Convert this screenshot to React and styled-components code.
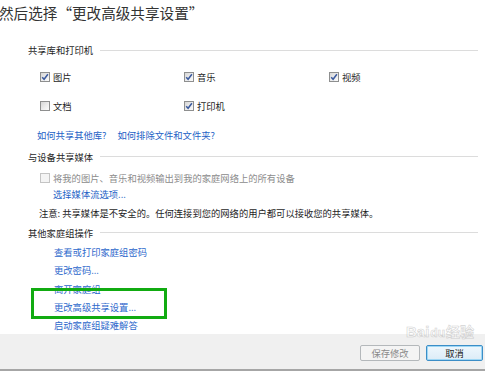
import React from "react";
import styled, { createGlobalStyle } from "styled-components";

const Global = createGlobalStyle`
  html, body {
    margin: 0;
    padding: 0;
    background: #ffffff;
  }
`;

const Page = styled.div`
  position: relative;
  width: 485px;
  height: 373px;
  overflow: hidden;
  display: flex;
  flex-direction: column;
  background: #ffffff;
  font-family: "Noto Sans CJK SC", "Liberation Sans", sans-serif;
  color: #1e1e1e;
`;

const Title = styled.div`
  height: 26px;
  line-height: 26px;
  margin-left: -1px;
  font-size: 14.6px;
  color: #333333;
  white-space: nowrap;
`;

const Main = styled.div`
  flex: 1;
  padding: 0 7px 0 28px;
  font-size: 9.3px;
`;

const Row = styled.div`
  display: flex;
  align-items: center;
  height: ${(p) => p.$h}px;
  margin-top: ${(p) => p.$mt || 0}px;
  padding-left: ${(p) => p.$pl || 0}px;
  white-space: nowrap;
`;

const HeadLabel = styled.span`
  color: #1e1e1e;
`;

const HeadLine = styled.div`
  flex: 1;
  height: 1px;
  margin-left: 7px;
  background: #dcdcdc;
`;

const CheckGrid = styled.div`
  display: grid;
  grid-template-columns: 144px 145px auto;
  align-items: center;
  height: 17px;
  margin-top: ${(p) => p.$mt}px;
  padding-left: 12px;
`;

const CheckItem = styled.label`
  display: flex;
  align-items: center;
  gap: 3px;
  color: ${(p) => (p.$disabled ? "#8c8c8c" : "#1e1e1e")};
`;

const Box = styled.span`
  box-sizing: border-box;
  width: 10px;
  height: 10px;
  border: 1px solid ${(p) => (p.$disabled ? "#c4c4c4" : "#8e8f8f")};
  background: ${(p) =>
    p.$disabled
      ? "#f4f4f4"
      : "linear-gradient(135deg, #d6d6d6 0%, #eeeeee 60%, #fafafa 100%)"};
  display: flex;
  align-items: center;
  justify-content: center;
`;

const Link = styled.span`
  color: #2462c6;
  margin-right: ${(p) => p.$mr || 0}px;
`;

const Note = styled.span`
  color: #1e1e1e;
`;

const LinkList = styled.div`
  display: flex;
  flex-direction: column;
  margin-top: 3.5px;
  padding-left: 26px;
`;

const ListLink = styled.div`
  height: 18.3px;
  line-height: 18.3px;
  color: #2d68cc;
`;

const Highlight = styled.div`
  position: absolute;
  left: 31px;
  top: 288px;
  width: 136px;
  height: 31px;
  box-sizing: border-box;
  border: 3px solid #11ab11;
`;

const Footer = styled.div`
  height: 35px;
  margin-bottom: 2px;
  background: #f0f0f0;
  border-bottom: 2px solid #a6a6a6;
  display: flex;
  justify-content: flex-end;
  align-items: flex-start;
  gap: 6px;
  padding: 11px 2px 0 0;
  box-sizing: content-box;
`;

const Button = styled.div`
  box-sizing: border-box;
  width: ${(p) => p.$w}px;
  height: 16px;
  border-radius: 2px;
  display: flex;
  align-items: center;
  justify-content: center;
  font-size: 9.3px;
  color: ${(p) => (p.$disabled ? "#8a8a8a" : "#1e1e1e")};
  border: 1px solid ${(p) => (p.$focus ? "#3c8ec7" : "#b4b8bb")};
  background: ${(p) =>
    p.$focus
      ? "linear-gradient(#eef7fd, #dcecf7)"
      : "#f4f4f4"};
  box-shadow: ${(p) => (p.$focus ? "inset 0 0 0 1px #9ed7f5" : "none")};
`;

const Watermark = styled.div`
  position: absolute;
  left: 406px;
  top: 324px;
  display: flex;
  align-items: flex-end;
  gap: 1px;
  white-space: nowrap;
  opacity: 0.5;
  pointer-events: none;
`;

const MarkText = styled.span`
  flex-shrink: 0;
  font-family: "Liberation Sans", "Noto Sans CJK SC", sans-serif;
  font-size: ${(p) => p.$size}px;
  font-weight: bold;
  color: #ffffff;
  -webkit-text-stroke: 0.6px #a9a9a9;
  line-height: 1;
`;

const Check = () => (
  <svg width="8" height="8" viewBox="0 0 8 8">
    <path d="M1.2 4.2 L3.1 6.3 L6.9 1.2" fill="none" stroke="#3b5a9e" strokeWidth="1.5" />
  </svg>
);

const CheckBox = ({ checked, disabled, children }) => (
  <CheckItem $disabled={disabled}>
    <Box $disabled={disabled}>{checked && <Check />}</Box>
    {children}
  </CheckItem>
);

const SectionHead = ({ label, mt }) => (
  <Row $h={14} $mt={mt}>
    <HeadLabel>{label}</HeadLabel>
    <HeadLine />
  </Row>
);

const groupLinks = [
  "查看或打印家庭组密码",
  "更改密码...",
  "离开家庭组",
  "更改高级共享设置...",
  "启动家庭组疑难解答",
];

export default function App() {
  return (
    <Page>
      <Global />
      <Title>然后选择“更改高级共享设置”</Title>
      <Main>
        <SectionHead label="共享库和打印机" mt={17} />
        <CheckGrid $mt={11}>
          <CheckBox checked>图片</CheckBox>
          <CheckBox checked>音乐</CheckBox>
          <CheckBox checked>视频</CheckBox>
        </CheckGrid>
        <CheckGrid $mt={12.5}>
          <CheckBox>文档</CheckBox>
          <CheckBox checked>打印机</CheckBox>
        </CheckGrid>
        <Row $h={16} $mt={12.5} $pl={9}>
          <Link $mr={11}>如何共享其他库?</Link>
          <Link>如何排除文件和文件夹?</Link>
        </Row>
        <SectionHead label="与设备共享媒体" mt={6.5} />
        <Row $h={16} $mt={6.5} $pl={12}>
          <CheckBox disabled>将我的图片、音乐和视频输出到我的家庭网络上的所有设备</CheckBox>
        </Row>
        <Row $h={15} $pl={25}>
          <Link>选择媒体流选项...</Link>
        </Row>
        <Row $h={15} $mt={4} $pl={11}>
          <Note>注意: 共享媒体是不安全的。任何连接到您的网络的用户都可以接收您的共享媒体。</Note>
        </Row>
        <SectionHead label="其他家庭组操作" mt={5.5} />
        <LinkList>
          {groupLinks.map((t) => (
            <ListLink key={t}>{t}</ListLink>
          ))}
        </LinkList>
      </Main>
      <Footer>
        <Button $w={60} $disabled>保存修改</Button>
        <Button $w={57} $focus>取消</Button>
      </Footer>
      <Highlight />
      <Watermark>
        <MarkText $size={15}>Bai</MarkText>
        <MarkText $size={12}>du</MarkText>
        <MarkText $size={14}>经验</MarkText>
      </Watermark>
    </Page>
  );
}
